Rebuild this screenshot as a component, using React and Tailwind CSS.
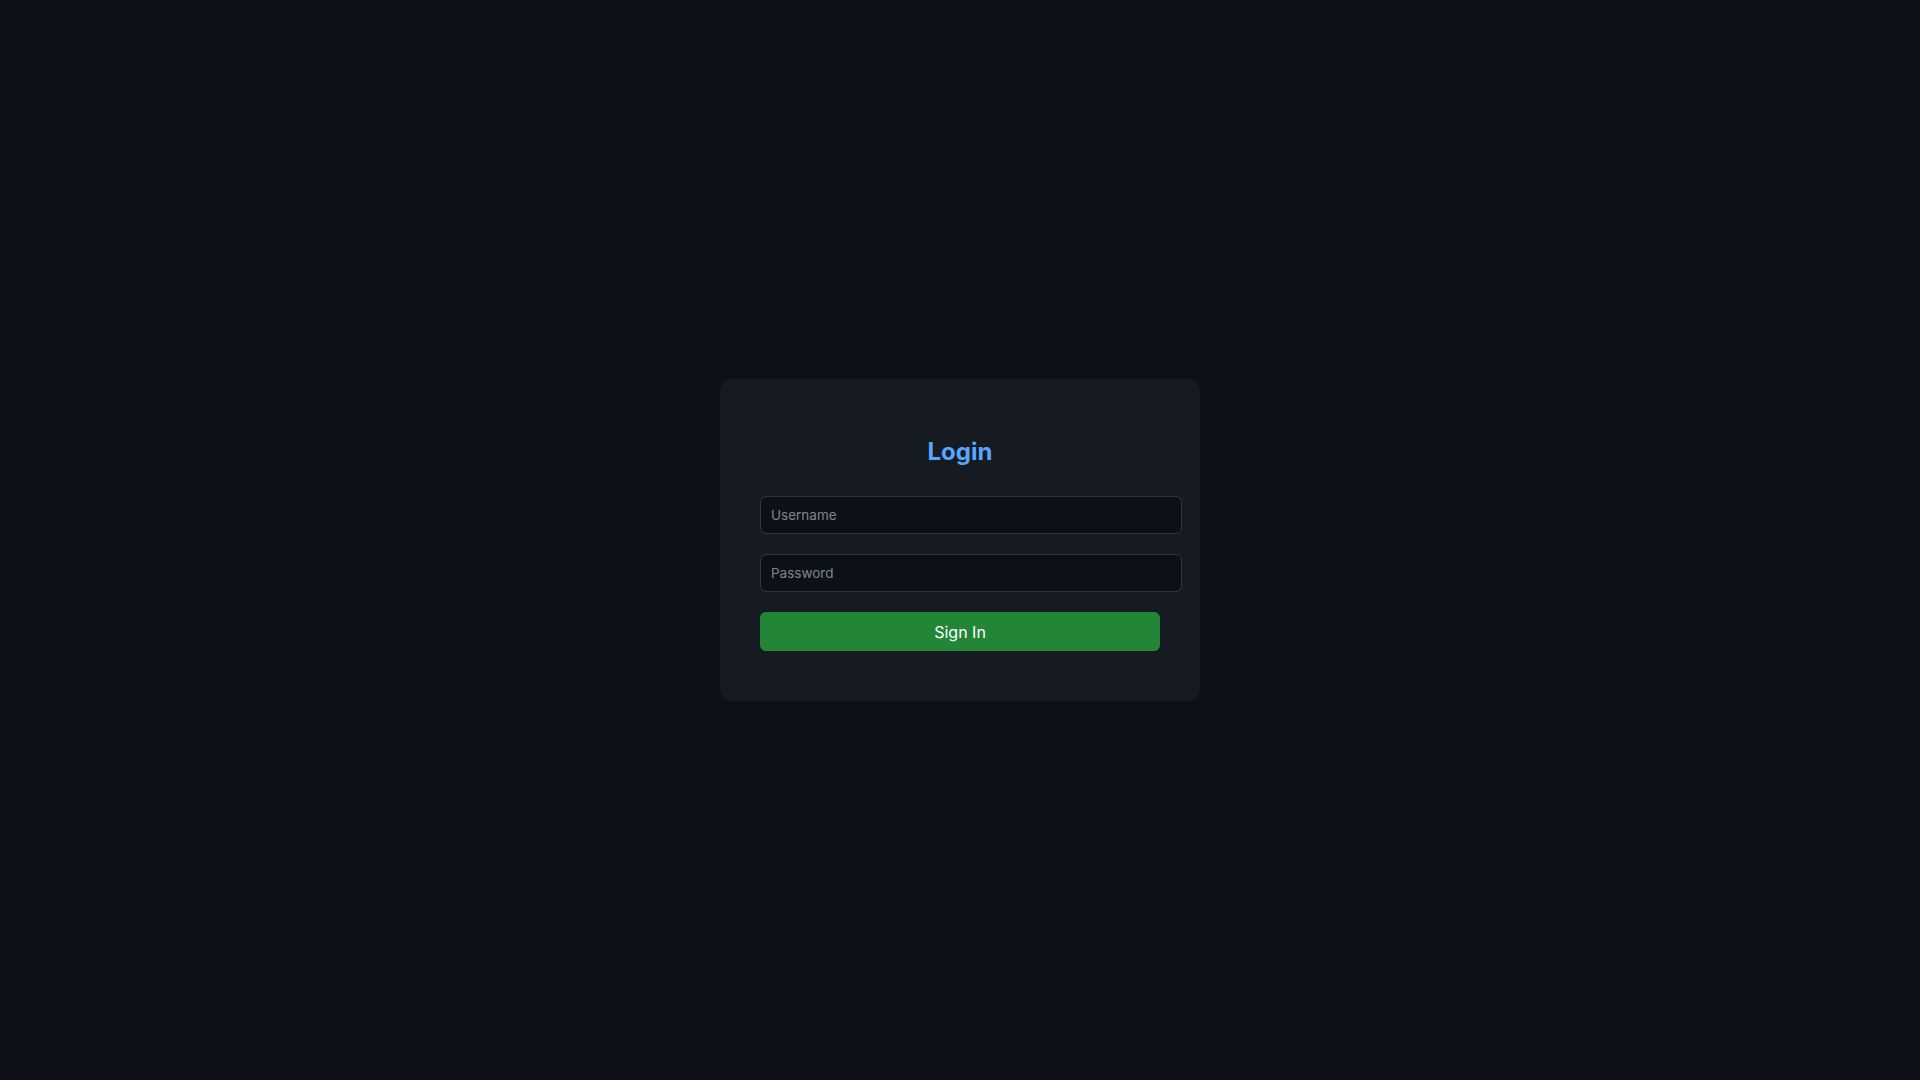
export default function App() {
  return (
    <div
      className="min-h-screen w-full bg-[#0d1117] flex items-center justify-center"
      style={{ fontFamily: 'Inter, "Noto Sans", sans-serif' }}
    >
      <div className="w-[480px] rounded-xl bg-[#161b22] px-10 pt-10 pb-[50px] flex flex-col">
        <h2 className="mt-[18px] mb-[30px] text-center text-[24px] leading-[29px] font-bold text-[#58a6ff]">
          Login
        </h2>
        <input
          type="text"
          placeholder="Username"
          className="w-[422px] h-[38px] mb-[20px] rounded-md border border-[#30363d] bg-[#0d1117] px-[10px] text-[13.5px] text-[#c9d1d9] placeholder:text-[#7d8590] outline-none"
        />
        <input
          type="password"
          placeholder="Password"
          className="w-[422px] h-[38px] mb-[20px] rounded-md border border-[#30363d] bg-[#0d1117] px-[10px] text-[13.5px] text-[#c9d1d9] placeholder:text-[#7d8590] outline-none"
        />
        <button
          type="button"
          className="w-full h-[39px] rounded-md bg-[#238636] text-white text-[16px] font-normal"
        >
          Sign In
        </button>
      </div>
    </div>
  );
}
